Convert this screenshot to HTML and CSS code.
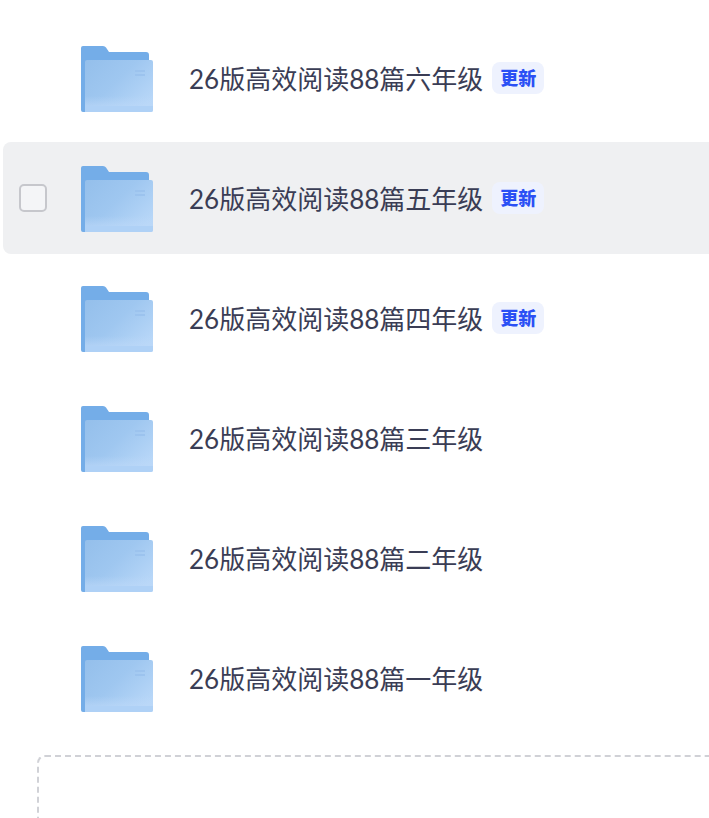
FILE: index.html
```html
<!DOCTYPE html>
<html lang="zh-CN">

<head>
    <meta charset="UTF-8">
    <meta name="viewport" content="width=device-width, initial-scale=1.0">
    <title>文件列表</title>
    <link rel="stylesheet" href="styles.css">
</head>

<body>
    <svg class="icon-defs" width="0" height="0" aria-hidden="true">
        <defs>
            <linearGradient id="folder-front" x1="0" y1="0" x2="1" y2="0.75">
                <stop offset="0" stop-color="#94bfeb" />
                <stop offset="0.5" stop-color="#9fc7f0" />
                <stop offset="1" stop-color="#b8d7f8" />
            </linearGradient>
            <linearGradient id="folder-band" x1="0" y1="0" x2="0" y2="1">
                <stop offset="0" stop-color="#bcd8f8" stop-opacity="0" />
                <stop offset="0.6" stop-color="#bcd8f8" stop-opacity="0.6" />
                <stop offset="0.62" stop-color="#afd1f6" />
                <stop offset="1" stop-color="#afd1f6" />
            </linearGradient>
            <symbol id="folder" viewBox="0 0 72 66">
                <path d="M2 0H22Q24 0 25 1.500L28 6H65Q68 6 68 9V66H2Q0 66 0 64V2Q0 0 2 0Z" fill="#74ade8" />
                <path d="M6 14H70Q72 14 72 16V64Q72 66 70 66H4V16Q4 14 6 14Z" fill="url(#folder-front)" />
                <path d="M4 50H72V64Q72 66 70 66H4Z" fill="url(#folder-band)" />
                <rect x="54" y="24" width="10" height="2" fill="#9cc3ee" />
                <rect x="54" y="28" width="10" height="2" fill="#9cc3ee" />
            </symbol>
        </defs>
    </svg>

    <ul class="file-list">
        <li class="file-row">
            <span class="check"></span>
            <svg class="folder-icon"><use href="#folder" /></svg>
            <span class="file-name">26版高效阅读88篇六年级</span>
            <span class="badge">更新</span>
        </li>
        <li class="file-row is-hover">
            <span class="check"></span>
            <svg class="folder-icon"><use href="#folder" /></svg>
            <span class="file-name">26版高效阅读88篇五年级</span>
            <span class="badge">更新</span>
        </li>
        <li class="file-row">
            <span class="check"></span>
            <svg class="folder-icon"><use href="#folder" /></svg>
            <span class="file-name">26版高效阅读88篇四年级</span>
            <span class="badge">更新</span>
        </li>
        <li class="file-row">
            <span class="check"></span>
            <svg class="folder-icon"><use href="#folder" /></svg>
            <span class="file-name">26版高效阅读88篇三年级</span>
        </li>
        <li class="file-row">
            <span class="check"></span>
            <svg class="folder-icon"><use href="#folder" /></svg>
            <span class="file-name">26版高效阅读88篇二年级</span>
        </li>
        <li class="file-row">
            <span class="check"></span>
            <svg class="folder-icon"><use href="#folder" /></svg>
            <span class="file-name">26版高效阅读88篇一年级</span>
        </li>
    </ul>

    <div class="drop-zone"></div>
</body>

</html>
```

FILE: styles.css
```css
html,
body {
    height: 818px;
    overflow: hidden;
}

body {
    margin: 0;
    padding: 0;
    background: #fff;
    font-family: "Lato", "Noto Sans CJK SC", sans-serif;
}

.icon-defs {
    position: absolute;
}

.file-list {
    list-style: none;
    margin: 0;
    padding: 22px 0 0 3px;
    display: flex;
    flex-direction: column;
    gap: 8px;
}

.file-row {
    display: flex;
    align-items: center;
    width: 760px;
    height: 112px;
    padding-left: 16px;
    border-radius: 8px;
}

.file-row.is-hover {
    background: #eff0f2;
}

.check {
    visibility: hidden;
    flex: none;
    box-sizing: border-box;
    width: 28px;
    height: 28px;
    margin-right: 34px;
    border: 2px solid #c6c7cc;
    border-radius: 5px;
    background: #f4f5f7;
}

.is-hover .check {
    visibility: visible;
}

.folder-icon {
    flex: none;
    width: 72px;
    height: 66px;
    margin-top: 2px;
    margin-right: 36px;
}

.file-name {
    margin-bottom: 2px;
    font-size: 26px;
    color: #3a3d55;
    white-space: nowrap;
}

.badge {
    flex: none;
    width: 52px;
    height: 32px;
    margin-left: 9px;
    border-radius: 8px;
    background: #eef2fe;
    color: #2b50f5;
    font-family: "Noto Sans CJK SC", sans-serif;
    font-size: 18px;
    font-weight: 900;
    line-height: 31px;
    text-align: center;
}

.drop-zone {
    box-sizing: border-box;
    width: 800px;
    height: 200px;
    margin: 21px 0 0 37px;
    border: 2px dashed #d0d1d6;
    border-radius: 8px;
}
```
